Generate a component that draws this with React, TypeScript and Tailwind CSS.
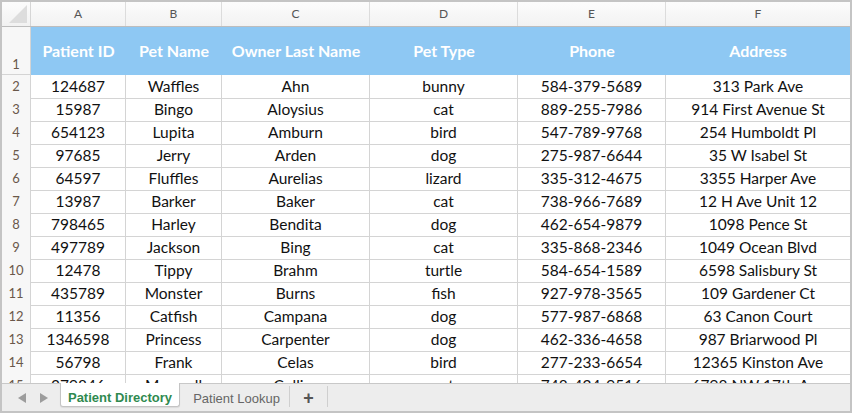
import React from 'react';

const columns = ['A', 'B', 'C', 'D', 'E', 'F'];
const headers = ['Patient ID', 'Pet Name', 'Owner Last Name', 'Pet Type', 'Phone', 'Address'];

const rows: string[][] = [
  ['124687', 'Waffles', 'Ahn', 'bunny', '584-379-5689', '313 Park Ave'],
  ['15987', 'Bingo', 'Aloysius', 'cat', '889-255-7986', '914 First Avenue St'],
  ['654123', 'Lupita', 'Amburn', 'bird', '547-789-9768', '254 Humboldt Pl'],
  ['97685', 'Jerry', 'Arden', 'dog', '275-987-6644', '35 W Isabel St'],
  ['64597', 'Fluffles', 'Aurelias', 'lizard', '335-312-4675', '3355 Harper Ave'],
  ['13987', 'Barker', 'Baker', 'cat', '738-966-7689', '12 H Ave Unit 12'],
  ['798465', 'Harley', 'Bendita', 'dog', '462-654-9879', '1098 Pence St'],
  ['497789', 'Jackson', 'Bing', 'cat', '335-868-2346', '1049 Ocean Blvd'],
  ['12478', 'Tippy', 'Brahm', 'turtle', '584-654-1589', '6598 Salisbury St'],
  ['435789', 'Monster', 'Burns', 'fish', '927-978-3565', '109 Gardener Ct'],
  ['11356', 'Catfish', 'Campana', 'dog', '577-987-6868', '63 Canon Court'],
  ['1346598', 'Princess', 'Carpenter', 'dog', '462-336-4658', '987 Briarwood Pl'],
  ['56798', 'Frank', 'Celas', 'bird', '277-233-6654', '12365 Kinston Ave'],
  ['379846', 'Maxwell', 'Collier', 'cat', '748-424-9516', '6798 NW 17th Ave'],
];

const gridCols = 'grid grid-cols-[29px_95px_96px_148px_148px_148px_184px]';

export default function App() {
  return (
    <div className="h-[413px] w-[853px] bg-white">
      <div className="flex h-[413px] w-[852px] flex-col border-2 border-[#c4c4c4] bg-white font-['Lato',sans-serif]">
        {/* sheet */}
        <div className="h-[381px] overflow-hidden">
          <div className={`${gridCols} h-[25px] border-b border-[#bdbdbd] bg-gradient-to-b from-[#fcfcfc] to-[#f2f2f2] text-[12px] text-[#555]`}>
            <div className="relative border-r border-[#d6d6d6]">
              <svg width="28" height="24" className="absolute left-0 top-0">
                <polygon points="7,21 25,3 25,21" fill="#dddddd" />
              </svg>
            </div>
            {columns.map((c) => (
              <div key={c} className="flex items-center justify-center border-r border-[#dcdcdc] last:border-r-0">
                {c}
              </div>
            ))}
          </div>

          <div className={`${gridCols} h-[48px]`}>
            <div className="flex items-end justify-center border-r border-b border-[#d4d4d4] bg-[#f7f7f7] pb-0 text-[13px] text-[#6a584a]">
              1
            </div>
            {headers.map((h) => (
              <div key={h} className="flex items-center justify-center bg-[#8ec8f3] text-[16px] font-bold text-white">
                {h}
              </div>
            ))}
          </div>

          {rows.map((r, i) => (
            <div key={i} className={`${gridCols} h-[23px]`}>
              <div className="flex items-center justify-center border-r border-b border-[#d4d4d4] bg-[#f7f7f7] text-[13px] text-[#6a584a]">
                {i + 2}
              </div>
              {r.map((v, j) => (
                <div
                  key={j}
                  className="flex items-center justify-center whitespace-nowrap border-r border-b border-[#d4d4d4] text-[15.5px] text-[#111] last:border-r-0"
                >
                  {v}
                </div>
              ))}
            </div>
          ))}
        </div>

        {/* sheet tabs */}
        <div className="flex h-[28px] items-start border-t border-[#c8c8c8] bg-[#ededed] font-['Liberation_Sans',sans-serif]">
          <div className="flex h-[26px] items-center gap-[14px] pt-[2px] pl-[16px] pr-[12px]">
            <svg width="8" height="10" viewBox="0 0 8 10">
              <polygon points="8,0 8,10 0,5" fill="#9c9c9c" />
            </svg>
            <svg width="8" height="10" viewBox="0 0 8 10">
              <polygon points="0,0 0,10 8,5" fill="#9c9c9c" />
            </svg>
          </div>
          <div className="-mt-px flex h-[24px] w-[120px] items-center justify-center rounded-b-[3px] border border-t-0 border-[#c4c4c4] bg-white pt-[6px] text-[13px] font-bold text-[#2f8a4f] shadow-[0_1px_1px_rgba(0,0,0,0.08)]">
            Patient Directory
          </div>
          <div className="mt-[2px] flex h-[21px] w-[110px] items-center justify-center border-r border-[#cfcfcf] pt-[4px] pl-[4px] text-[13px] text-[#666]">
            Patient Lookup
          </div>
          <div className="mt-[2px] flex h-[21px] w-[38px] items-center justify-center border-r border-[#cfcfcf] pt-[3px] text-[18px] font-bold leading-none text-[#555]">
            +
          </div>
        </div>
      </div>
    </div>
  );
}
